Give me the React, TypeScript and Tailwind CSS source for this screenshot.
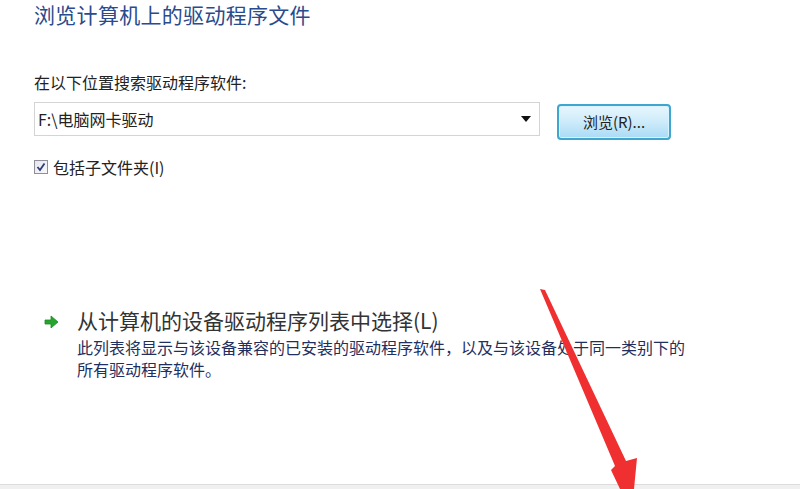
import React from "react";

const font = { fontFamily: '"Noto Sans CJK SC", "Noto Sans", sans-serif' };

export default function App() {
  return (
    <div
      className="relative w-[800px] h-[489px] bg-white overflow-hidden flex flex-col"
      style={font}
    >
      <div className="flex-1 flex flex-col pl-[34px]">
        <h1 className="mt-0 text-[21px] leading-[28px] text-[#2a4b8d] tracking-[0.3px]">
          浏览计算机上的驱动程序文件
        </h1>

        <div className="mt-[44px] text-[16px] leading-[20px] text-[#222]">
          在以下位置搜索驱动程序软件:
        </div>

        <div className="mt-[10px] flex items-start">
          <div className="w-[506px] h-[34px] border border-[#d4d4d4] bg-white flex items-center pl-[3px] pr-[8px]">
            <span className="flex-1 text-[16px] text-[#222]">F:\电脑网卡驱动</span>
            <svg width="10" height="6" viewBox="0 0 10 6">
              <path d="M0 0 L10 0 L5 6 Z" fill="#111" />
            </svg>
          </div>
          <button className="ml-[17px] mt-[2px] w-[114px] h-[36px] rounded-[4px] border-2 border-[#3fa6cf] bg-gradient-to-b from-[#e8f6fd] via-[#cdebfa] to-[#a9dbf6] text-[15px] text-[#222] shadow-[inset_0_0_0_1px_#d9f2fd]">
            浏览(R)...
          </button>
        </div>

        <label className="mt-[15px] flex items-center">
          <span className="w-[14px] h-[14px] border border-[#8f8f9a] bg-gradient-to-br from-[#e6e6ee] to-[#f8f8fb] flex items-center justify-center">
            <svg width="10" height="10" viewBox="0 0 10 10">
              <path d="M1.5 5 L4 8 L8.5 1.5" stroke="#2b3d7a" strokeWidth="1.8" fill="none" />
            </svg>
          </span>
          <span className="ml-[5px] text-[16px] text-[#222]">包括子文件夹(I)</span>
        </label>

        <div className="mt-[128px] flex">
          <svg width="16" height="14" viewBox="0 0 16 14" className="ml-[10px] mt-[8px]">
            <path
              d="M1 5 H7 V1 L14 7 L7 13 V9 H1 Z"
              fill="#25a52e"
              stroke="#1a8a22"
              strokeWidth="0.8"
            />
          </svg>
          <div className="ml-[17px] flex flex-col">
            <div className="text-[21px] leading-[26px] text-[#333]">
              从计算机的设备驱动程序列表中选择(L)
            </div>
            <div className="mt-[3px] text-[16px] leading-[22px] text-[#1f2f60]">
              此列表将显示与该设备兼容的已安装的驱动程序软件，以及与该设备处于同一类别下的
              <br />
              所有驱动程序软件。
            </div>
          </div>
        </div>
      </div>

      <div className="h-[5px] border-t border-[#dcdcdc] bg-[#f0f0f0]" />

      <svg
        className="absolute left-0 top-0 pointer-events-none"
        width="800"
        height="489"
        viewBox="0 0 800 489"
      >
        <path
          d="M540 289 L545 290 L626 461 L637 458 L634 489 L620 489 L611 470 L615 466 Z"
          fill="#f03030"
        />
      </svg>
    </div>
  );
}
